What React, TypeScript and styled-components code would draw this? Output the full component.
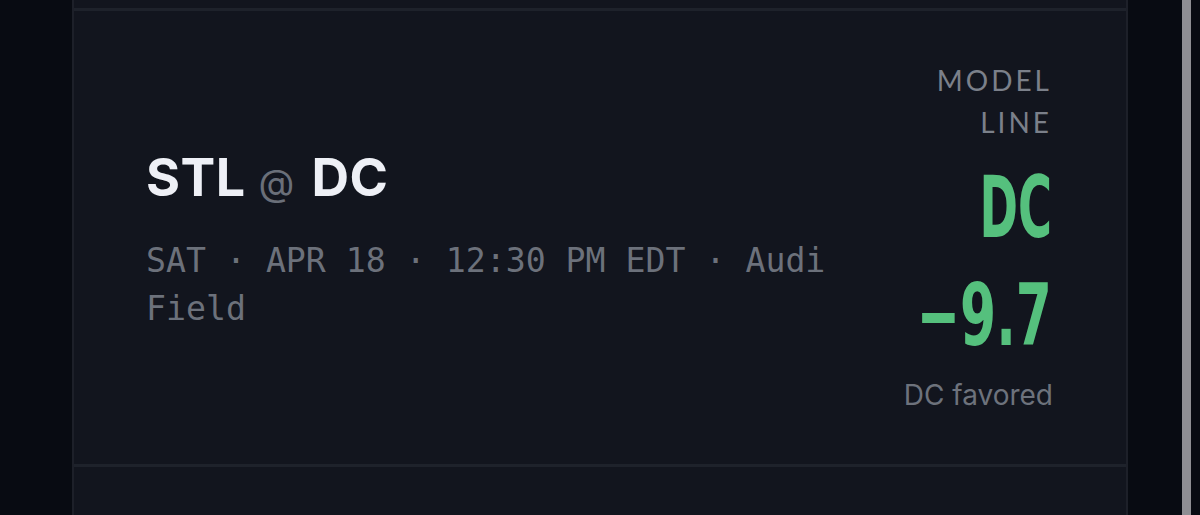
import React from "react";
import styled, { createGlobalStyle } from "styled-components";

const Global = createGlobalStyle`
  html, body { margin: 0; padding: 0; background: #080b12; }
  body { font-family: Inter, "Noto Sans", sans-serif; }
  #root { height: 515px; overflow: hidden; }
`;

const Page = styled.div`
  display: flex;
  height: 515px;
  padding-left: 72px;
  background: #080b12;
  overflow: hidden;
`;

const List = styled.div`
  width: 1056px;
  display: flex;
  flex-direction: column;
  border-left: 2px solid #1d2029;
  border-right: 2px solid #1d2029;
  box-sizing: border-box;
  background: #12151e;
`;

const CardStub = styled.div<{ $h: number }>`
  height: ${(p) => p.$h}px;
  flex: none;
  border-bottom: 3px solid #1e222b;
`;

const GameCard = styled.div`
  height: 456px;
  flex: none;
  box-sizing: border-box;
  border-bottom: 3px solid #1e222b;
  display: flex;
  align-items: center;
  justify-content: space-between;
  padding: 0 74px 0 72px;
`;

const Info = styled.div`
  flex: 1;
  min-width: 0;
  max-width: 720px;
  margin-top: 6px;
`;

const Title = styled.div`
  font-family: Inter, sans-serif;
  font-weight: 700;
  font-size: 52px;
  line-height: 60px;
  color: #eef0f6;
  letter-spacing: 0.5px;
`;

const At = styled.span`
  font-weight: 400;
  font-size: 37px;
  color: #6a6f79;
  margin-right: 4px;
`;

const Meta = styled.div`
  margin-top: 24px;
  font-family: "DejaVu Sans Mono", "Liberation Mono", monospace;
  font-size: 33.2px;
  line-height: 48px;
  color: #6c717b;
`;

const Line = styled.div`
  width: 154px;
  flex: none;
  display: flex;
  flex-direction: column;
  align-items: flex-end;
  text-align: right;
  margin-top: -4px;
`;

const Label = styled.div`
  font-family: Lato, sans-serif;
  font-size: 28px;
  line-height: 42px;
  letter-spacing: 3px;
  color: #7b808a;
`;

const Big = styled.div<{ $sx: number; $mt: number }>`
  font-family: "DejaVu Sans Condensed", "DejaVu Sans", sans-serif;
  font-weight: 700;
  font-size: 86px;
  line-height: 86px;
  color: #55c07d;
  white-space: nowrap;
  margin-top: ${(p) => p.$mt}px;
  transform: scaleX(${(p) => p.$sx});
  transform-origin: right center;
`;

const Note = styled.div`
  margin-top: 19px;
  font-family: Inter, sans-serif;
  font-size: 28px;
  line-height: 36px;
  color: #6d727c;
  white-space: nowrap;
  margin-right: -1px;
`;

const Gutter = styled.div`
  width: 54px;
  flex: none;
`;

const ScrollThumb = styled.div`
  width: 9px;
  flex: none;
  background: #8e8e93;
`;

export default function App() {
  return (
    <>
      <Global />
      <Page>
        <List>
          <CardStub $h={8} />
          <GameCard>
            <Info>
              <Title>
                STL <At>@</At> DC
              </Title>
              <Meta>SAT · APR 18 · 12:30 PM EDT · Audi Field</Meta>
            </Info>
            <Line>
              <Label>MODEL LINE</Label>
              <Big $sx={0.6} $mt={21}>DC</Big>
              <Big $sx={0.67} $mt={22}>−9.7</Big>
              <Note>DC favored</Note>
            </Line>
          </GameCard>
          <CardStub $h={60} />
        </List>
        <Gutter />
        <ScrollThumb />
      </Page>
    </>
  );
}
